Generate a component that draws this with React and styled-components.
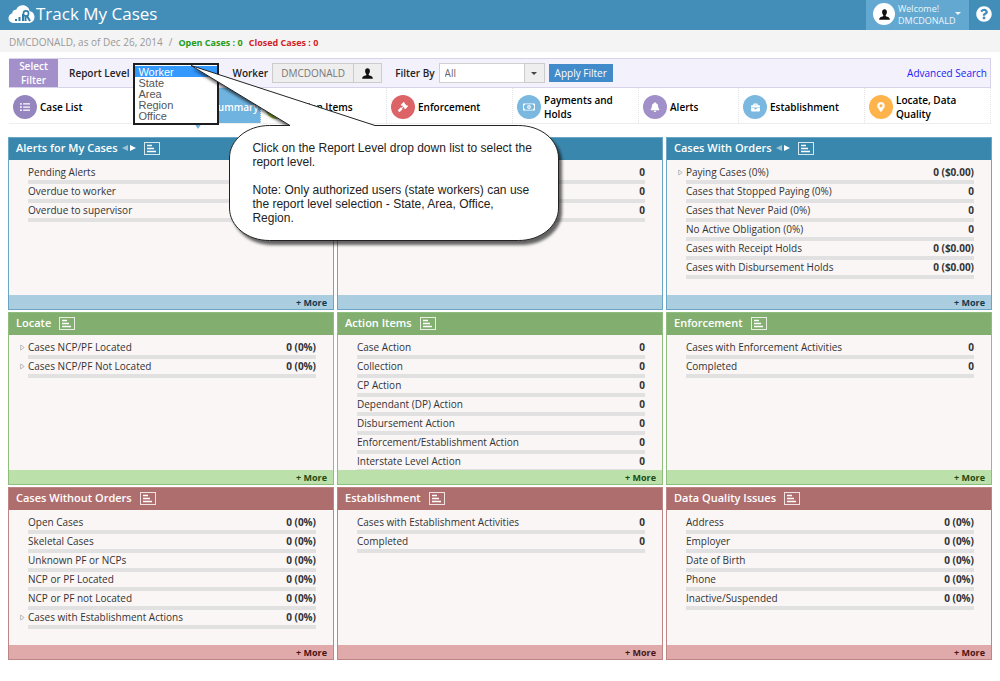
import React from 'react'
import styled, { createGlobalStyle } from 'styled-components'
import {
  FaListUl,
  FaGavel,
  FaRegMoneyBillAlt,
  FaBell,
  FaBriefcase,
  FaMapMarkerAlt,
  FaQuestionCircle,
  FaChartBar,
  FaBolt,
} from 'react-icons/fa'

const GlobalStyle = createGlobalStyle`
* {
  box-sizing: border-box;
}
body {
  margin: 0;
  background-color: #fff;
  color: #333;
  font-family: 'Open Sans', 'Noto Sans', sans-serif;
  font-size: 10px;
}
button, input, select {
  font-family: inherit;
  font-size: inherit;
  margin: 0;
}
`

const Header = styled.header`
display: flex;
align-items: center;
height: 30px;
padding: 0 8px;
background-color: #438eb9;
color: white;
`

const Title = styled.h1`
flex: 1;
margin: 0 0 2px 1px;
font-size: 17px;
font-weight: 400;
line-height: 28px;
`

const UserMenu = styled.button`
display: flex;
align-items: center;
gap: 3px;
width: 103px;
height: 30px;
margin-right: 7px;
padding: 0 7px;
border: 0;
background-color: #62a8d1;
color: #eef6fb;
font-size: 9px;
line-height: 12px;
text-align: left;
cursor: pointer;
`

const Avatar = styled.span`
display: flex;
align-items: center;
justify-content: center;
flex: none;
width: 22px;
height: 22px;
margin-bottom: 2px;
border-radius: 50%;
background-color: white;
`

const Caret = styled.span`
align-self: ${(props) => (props.$top ? 'flex-start' : 'center')};
margin: ${(props) => (props.$top ? '12px 4px 0 -4px' : '0')};
border: 3px solid transparent;
border-top-color: currentColor;
border-bottom: 0;
`

const HelpButton = styled.button`
display: flex;
margin-bottom: 3px;
padding: 0;
border: 0;
background: none;
color: white;
cursor: pointer;
`

const StatusBar = styled.div`
display: flex;
align-items: center;
gap: 6px;
height: 22px;
padding: 2px 9px 0;
background-color: #f4f4f4;
color: #999;
`

const Count = styled.span`
color: ${(props) => props.$color};
font-size: 9px;
font-weight: 700;
`

const Page = styled.main`
padding: 6px 8px;
`

const FilterBar = styled.form`
display: flex;
align-items: center;
height: 30px;
margin: 0 1px;
border: 1px solid #d7d3ea;
border-left: 0;
background-color: #f3f1fc;
`

const SelectFilter = styled.button`
align-self: stretch;
width: 49px;
padding: 0;
border: 0;
background-color: #a390cb;
color: white;
font-weight: 600;
line-height: 14px;
cursor: pointer;
`

const FieldLabel = styled.label`
margin: 0 4px 0 ${(props) => props.$gap}px;
font-weight: 600;
color: #222;
`

const LevelAnchor = styled.div`
position: relative;
width: 86px;
height: 20px;
`

const LevelList = styled.select`
position: absolute;
z-index: 2;
top: 0;
left: 0;
width: 100%;
height: 62px;
padding: 1px 0 0;
border: 2px solid #1d1d1d;
border-radius: 0;
background-color: white;
color: #555;
font-family: 'Liberation Sans', Arial, sans-serif;
font-size: 11px;
overflow: hidden;
outline: 0;

option {
  height: 11px;
  min-height: 0;
  padding: 0 3px;
  line-height: 11px;
}
option:checked {
  background: linear-gradient(#3399ff, #3399ff);
  color: white;
}
`

const Callout = styled.div`
position: absolute;
z-index: 3;
top: -3px;
left: 52px;
width: 385px;
padding: 81px 34px 0 67px;
color: #222;
font-family: 'Liberation Sans', Arial, sans-serif;
font-size: 12px;
line-height: 14px;
pointer-events: none;

p {
  position: relative;
  margin: 0 0 14px;
}
`

const Balloon = styled.svg`
position: absolute;
top: 0;
left: 0;
`

const WorkerInput = styled.input`
width: 82px;
height: 20px;
padding: 0 8px;
border: 1px solid #ccc;
background-color: #eee;
color: #777;
`

const PickButton = styled.button`
display: flex;
align-items: center;
justify-content: center;
width: 28px;
height: 20px;
padding: 0;
border: 1px solid #ccc;
border-left: 0;
background-color: #eee;
cursor: pointer;
`

const FilterBy = styled.div`
position: relative;
width: 106px;
height: 20px;
`

const FilterSelect = styled.select`
width: 100%;
height: 100%;
padding: 0 5px;
border: 1px solid #d0d0d0;
border-radius: 0;
appearance: none;
background-color: white;
color: #666;
`

const FilterArrow = styled.span`
position: absolute;
top: 0;
right: 0;
display: flex;
align-items: center;
justify-content: center;
width: 21px;
height: 20px;
border: 1px solid #ccc;
background-color: #eee;
color: #444;
pointer-events: none;
`

const ApplyButton = styled.button`
height: 18px;
margin-left: 4px;
padding: 0 6px;
border: 0;
background-color: #428bca;
color: white;
cursor: pointer;
`

const SearchLink = styled.a`
margin-left: auto;
padding-right: 3px;
color: #2222f0;
text-decoration: none;
`

const Nav = styled.nav`
display: grid;
grid-template-columns: 126fr 126fr 126fr 126fr 126fr 100fr 126fr 126fr;
height: 36px;
margin: 0 1px 13px;
border-bottom: 1px solid #eee;
`

const NavItem = styled.a`
position: relative;
display: flex;
align-items: center;
gap: 3px;
min-width: 0;
padding: 3px 4px 0;
border-right: 1px dotted #e4e4e4;
background-color: ${(props) => (props.$active ? '#6fb3e0' : 'white')};
color: ${(props) => (props.$active ? 'white' : '#000')};
font-weight: 600;
line-height: 14px;
text-decoration: none;
white-space: ${(props) => (props.$active ? 'nowrap' : 'normal')};

&::after {
  content: '';
  display: ${(props) => (props.$active ? 'block' : 'none')};
  position: absolute;
  top: 100%;
  left: 50%;
  margin-left: -4px;
  border: 4px solid transparent;
  border-top: 6px solid #6fb3e0;
  border-bottom: 0;
}
`

const NavIcon = styled.span`
display: flex;
align-items: center;
justify-content: center;
flex: none;
width: 24px;
height: 24px;
border-radius: 50%;
background-color: ${(props) => props.$color};
color: white;
font-size: ${(props) => props.$size || 10}px;
`

const Board = styled.div`
display: grid;
grid-template-columns: repeat(3, 1fr);
gap: 2px 3px;
`

const Panel = styled.section`
display: flex;
flex-direction: column;
height: 173px;
border: 1px solid ${(props) => props.$tone.border};
background-color: #faf6f6;
`

const PanelHead = styled.div`
display: flex;
align-items: center;
height: 22px;
padding: 0 7px 2px;
background-color: ${(props) => props.$tone.head};
color: white;
`

const PanelTitle = styled.h2`
margin: 0;
font-size: 11px;
font-weight: 600;
line-height: 20px;
`

const IconButton = styled.button`
display: flex;
margin-left: ${(props) => props.$gap || 0}px;
padding: 0;
border: 0;
background: none;
color: white;
cursor: pointer;
`

const Rows = styled.ul`
flex: 1;
min-height: 0;
margin: 0;
padding: 5px 0 0;
list-style: none;
overflow: hidden;
`

const Row = styled.li`
display: grid;
grid-template-columns: 19px 1fr auto 17px;
grid-template-rows: 15px 4px;
align-items: center;
line-height: 15px;
color: #333;
`

const Expander = styled.span`
grid-column: 1;
display: flex;
justify-content: flex-end;
padding-right: 3px;
`

const RowName = styled.span`
grid-column: 2;
`

const RowValue = styled.strong`
grid-column: 3;
font-weight: 700;
`

const Bar = styled.div`
grid-row: 2;
grid-column: 2 / 4;
height: 4px;
background-color: #e1e1e1;
`

const PanelFoot = styled.div`
display: flex;
align-items: center;
justify-content: flex-end;
height: 14px;
padding: 1px 6px 0 0;
background-color: ${(props) => props.$tone.foot};
`

const MoreLink = styled.a`
color: ${(props) => props.$tone.text};
font-size: 9px;
font-weight: 700;
line-height: 13px;
text-decoration: none;
`

const blue = { head: '#3a87ad', border: '#6ba6c6', foot: '#aacde0', text: '#12394d' }
const green = { head: '#82af6f', border: '#8fbd7c', foot: '#bbe0a9', text: '#1f4a10' }
const red = { head: '#af6e6e', border: '#bf8585', foot: '#e0aaaa', text: '#4a1414' }

const navItems = [
  { text: 'Case List', color: '#9585bf', icon: <FaListUl /> },
  { text: 'Caseload Summary', color: '#4a96ce', icon: <FaChartBar />, active: true },
  { text: 'Action Items', color: '#9abc32', icon: <FaBolt /> },
  { text: 'Enforcement', color: '#dd6466', icon: <FaGavel /> },
  { text: 'Payments and Holds', color: '#7ab8e0', icon: <FaRegMoneyBillAlt />, size: 12 },
  { text: 'Alerts', color: '#a08fc8', icon: <FaBell /> },
  { text: 'Establishment', color: '#7ab8e0', icon: <FaBriefcase />, size: 9 },
  { text: 'Locate, Data Quality', color: '#ffb44b', icon: <FaMapMarkerAlt /> },
]

const panels = [
  {
    id: 'alerts',
    title: 'Alerts for My Cases',
    tone: blue,
    pager: true,
    rows: [['Pending Alerts'], ['Overdue to worker'], ['Overdue to supervisor']],
  },
  {
    id: 'untitled',
    tone: blue,
    noMore: true,
    rows: [['', '0'], ['', '0'], ['', '0']],
  },
  {
    id: 'orders',
    title: 'Cases With Orders',
    tone: blue,
    pager: true,
    rows: [
      ['Paying Cases (0%)', '0 ($0.00)', true],
      ['Cases that Stopped Paying (0%)', '0'],
      ['Cases that Never Paid (0%)', '0'],
      ['No Active Obligation (0%)', '0'],
      ['Cases with Receipt Holds', '0 ($0.00)'],
      ['Cases with Disbursement Holds', '0 ($0.00)'],
    ],
  },
  {
    id: 'locate',
    title: 'Locate',
    tone: green,
    rows: [['Cases NCP/PF Located', '0 (0%)', true], ['Cases NCP/PF Not Located', '0 (0%)', true]],
  },
  {
    id: 'actions',
    title: 'Action Items',
    tone: green,
    rows: [
      ['Case Action', '0'],
      ['Collection', '0'],
      ['CP Action', '0'],
      ['Dependant (DP) Action', '0'],
      ['Disbursement Action', '0'],
      ['Enforcement/Establishment Action', '0'],
      ['Interstate Level Action', '0'],
    ],
  },
  {
    id: 'enforcement',
    title: 'Enforcement',
    tone: green,
    rows: [['Cases with Enforcement Activities', '0'], ['Completed', '0']],
  },
  {
    id: 'noorders',
    title: 'Cases Without Orders',
    tone: red,
    rows: [
      ['Open Cases', '0 (0%)'],
      ['Skeletal Cases', '0 (0%)'],
      ['Unknown PF or NCPs', '0 (0%)'],
      ['NCP or PF Located', '0 (0%)'],
      ['NCP or PF not Located', '0 (0%)'],
      ['Cases with Establishment Actions', '0 (0%)', true],
    ],
  },
  {
    id: 'establishment',
    title: 'Establishment',
    tone: red,
    rows: [['Cases with Establishment Activities', '0'], ['Completed', '0']],
  },
  {
    id: 'quality',
    title: 'Data Quality Issues',
    tone: red,
    rows: [
      ['Address', '0 (0%)'],
      ['Employer', '0 (0%)'],
      ['Date of Birth', '0 (0%)'],
      ['Phone', '0 (0%)'],
      ['Inactive/Suspended', '0 (0%)'],
    ],
  },
]

//Small drawings:

const CloudLogo = () => (
  <svg width="27" height="20" viewBox="0 0 27 20" aria-hidden="true">
    <path
      fill="white"
      d="M6.5 18C3 18 .5 16 .5 13.200c0-2.500 1.700-4.300 3.800-4.900C4.200 5.900 6 4.600 8.200 4.800 9.200 1.900 11.600.3 14.700.3c3.600 0 6.500 2.400 6.900 5.900 2.900.3 4.900 2.600 4.900 5.800 0 3.600-2.500 6-6 6z"
    />
    <path stroke="#2f7dac" strokeWidth="2" d="M8 16v-2M11.500 16v-4M15 16V9" />
    <circle cx="18" cy="8.500" r="2.600" fill="none" stroke="#2f7dac" strokeWidth="1.600" />
    <path stroke="#2f7dac" strokeWidth="2" d="M17.500 16v-4M19 11l3 5" />
  </svg>
)

const UserGlyph = () => (
  <svg width="11" height="11" viewBox="0 0 12 12" aria-hidden="true">
    <path
      fill="#111"
      d="M6 .3c1.600 0 2.600 1.200 2.600 2.900 0 1.300-.5 2.600-1.300 3.400v1.100c.4.600 3.300 1.200 4 2 .4.400.5 1.200.5 2H.2c0-.8.100-1.600.5-2 .7-.8 3.600-1.400 4-2V6.600C3.900 5.800 3.400 4.500 3.400 3.200 3.400 1.500 4.400.3 6 .3z"
    />
  </svg>
)

const ChartGlyph = () => (
  <svg width="16" height="13" viewBox="0 0 16 13" aria-hidden="true">
    <rect x=".5" y=".5" width="15" height="12" fill="none" stroke="currentColor" opacity=".8" />
    <path stroke="currentColor" strokeWidth="1.600" d="M3 3.500h5M3 6.500h7M3 9.500h9" />
  </svg>
)

const Arrow = ({ left }) => (
  <svg width="6" height="6" viewBox="0 0 6 6" opacity={left ? 0.5 : 1} aria-hidden="true">
    <path fill="currentColor" d={left ? 'M6 0v6L0 3z' : 'M0 0v6l6-3z'} />
  </svg>
)

const ExpandGlyph = () => (
  <svg width="5" height="7" viewBox="0 0 5 7" aria-hidden="true">
    <path fill="none" stroke="#bbb" d="M.7 1v5l3.500-2.500z" />
  </svg>
)

const HelpBalloon = () => (
  <Callout role="note">
    <Balloon width="385" height="192" viewBox="0 0 385 192" aria-hidden="true">
      <defs>
        <filter id="shadow" x="-5%" y="-5%" width="115%" height="115%">
          <feDropShadow dx="3" dy="4" stdDeviation="1.500" floodColor="#000" floodOpacity=".6" />
        </filter>
      </defs>
      <path
        fill="white"
        stroke="#222"
        filter="url(#shadow)"
        d="M6 5.500L190 65.500H333.500C356 65.500 373.500 80 373.500 98V148C373.500 166 356 180.500 333.500 180.500H84.500C62 180.500 44.500 166 44.500 148V98C44.500 80 62 65.500 84.500 65.500H105z"
      />
    </Balloon>
    <p>Click on the Report Level drop down list to select the report level.</p>
    <p>Note: Only authorized users (state workers) can use the report level selection - State, Area, Office, Region.</p>
  </Callout>
)

const CasePanel = ({ title, tone, rows, pager, noMore }) => (
  <Panel $tone={tone}>
    <PanelHead $tone={tone}>
      {title && <PanelTitle>{title}</PanelTitle>}
      {pager && (
        <>
          <IconButton $gap={4} aria-label="Previous"><Arrow left /></IconButton>
          <IconButton $gap={2} aria-label="Next"><Arrow /></IconButton>
        </>
      )}
      {title && <IconButton $gap={8} aria-label="Chart"><ChartGlyph /></IconButton>}
    </PanelHead>
    <Rows>
      {rows.map(([name, value, expandable], index) => (
        <Row key={index}>
          <Expander>{expandable && <ExpandGlyph />}</Expander>
          <RowName>{name}</RowName>
          <RowValue>{value}</RowValue>
          <Bar />
        </Row>
      ))}
    </Rows>
    <PanelFoot $tone={tone}>
      {!noMore && <MoreLink href="#more" $tone={tone}>+ More</MoreLink>}
    </PanelFoot>
  </Panel>
)

export default class App extends React.Component {
  state = {
    level: 'Worker',
    filter: 'All',
  }

  onChangeLevel = (event) => {
    this.setState({ level: event.target.value })
  }

  onChangeFilter = (event) => {
    this.setState({ filter: event.target.value })
  }

  render() {
    return (
      <>
        <GlobalStyle />
        <Header>
          <CloudLogo />
          <Title>Track My Cases</Title>
          <UserMenu>
            <Avatar><UserGlyph /></Avatar>
            <span>Welcome!<br />DMCDONALD</span>
            <Caret $top />
          </UserMenu>
          <HelpButton aria-label="Help"><FaQuestionCircle size={16} /></HelpButton>
        </Header>
        <StatusBar>
          <span>DMCDONALD, as of Dec 26, 2014</span>
          <span>/</span>
          <Count $color="#1f9d1f">Open Cases : 0</Count>
          <Count $color="#d2232a">Closed Cases : 0</Count>
        </StatusBar>
        <Page>
          <FilterBar onSubmit={(event) => event.preventDefault()}>
            <SelectFilter type="button">Select<br />Filter</SelectFilter>
            <FieldLabel htmlFor="level" $gap={11}>Report Level</FieldLabel>
            <LevelAnchor>
              <LevelList id="level" size={5} value={this.state.level} onChange={this.onChangeLevel}>
                <option>Worker</option>
                <option>State</option>
                <option>Area</option>
                <option>Region</option>
                <option>Office</option>
              </LevelList>
              <HelpBalloon />
            </LevelAnchor>
            <FieldLabel htmlFor="worker" $gap={13}>Worker</FieldLabel>
            <WorkerInput id="worker" readOnly value="DMCDONALD" />
            <PickButton type="button" aria-label="Pick worker"><UserGlyph /></PickButton>
            <FieldLabel htmlFor="filter" $gap={13}>Filter By</FieldLabel>
            <FilterBy>
              <FilterSelect id="filter" value={this.state.filter} onChange={this.onChangeFilter}>
                <option>All</option>
              </FilterSelect>
              <FilterArrow><Caret /></FilterArrow>
            </FilterBy>
            <ApplyButton type="submit">Apply Filter</ApplyButton>
            <SearchLink href="#search">Advanced Search</SearchLink>
          </FilterBar>
          <Nav>
            {navItems.map((item) => (
              <NavItem key={item.text} href="#tab" $active={item.active}>
                <NavIcon $color={item.color} $size={item.size}>{item.icon}</NavIcon>
                <span>{item.text}</span>
              </NavItem>
            ))}
          </Nav>
          <Board>
            {panels.map((panel) => (
              <CasePanel key={panel.id} {...panel} />
            ))}
          </Board>
        </Page>
      </>
    )
  }
}
